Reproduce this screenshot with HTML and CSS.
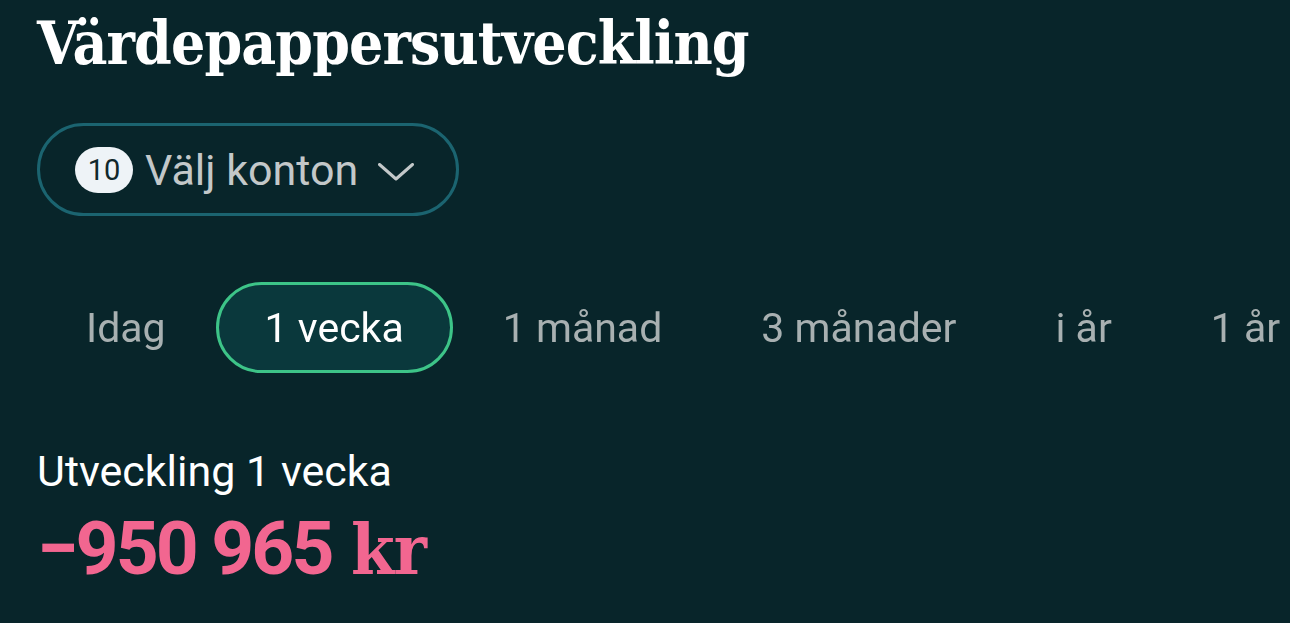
FILE: index.html
```html
<!DOCTYPE html>
<html lang="sv">
<head>
<meta charset="utf-8">
<title>Värdepappersutveckling</title>
<link rel="stylesheet" href="styles.css">
</head>
<body>
<main class="page">
  <h1 class="title">Värdepappersutveckling</h1>
  <div class="select-row">
    <button class="account-select" type="button">
      <span class="badge">10</span>
      <span class="select-label">Välj konton</span>
      <svg class="chevron" viewBox="0 0 36 18" width="36" height="18" aria-hidden="true">
        <path d="M1.5 1.5 L18 16 L34.5 1.5" fill="none" stroke="#c3c8c9" stroke-width="3" stroke-linecap="round" stroke-linejoin="round"/>
      </svg>
    </button>
  </div>
  <nav class="tabs">
    <span class="tab">Idag</span>
    <span class="tab tab-active">1 vecka</span>
    <span class="tab">1 månad</span>
    <span class="tab">3 månader</span>
    <span class="tab">i år</span>
    <span class="tab">1 år</span>
  </nav>
  <section class="summary">
    <div class="summary-label">Utveckling 1 vecka</div>
    <div class="summary-value">−950 965 <span class="unit">kr</span></div>
  </section>
</main>
</body>
</html>
```

FILE: styles.css
```css
html, body {
  margin: 0;
  padding: 0;
  background: #08252a;
  overflow: hidden;
}
.page {
  width: 1290px;
  height: 623px;
  box-sizing: border-box;
  padding: 0 0 0 37px;
  font-family: Roboto, "Noto Sans", sans-serif;
  color: #ffffff;
  overflow: hidden;
}
.title {
  margin: 0;
  padding-top: 8px;
  font-family: "DejaVu Serif", serif;
  font-stretch: condensed;
  font-weight: bold;
  font-size: 60px;
  line-height: 70px;
  color: #ffffff;
  letter-spacing: -0.9px;
}
.select-row {
  margin-top: 45px;
  display: flex;
}
.account-select {
  display: flex;
  align-items: center;
  height: 93px;
  box-sizing: border-box;
  padding: 0 42px 0 35px;
  border: 3px solid #1b6470;
  border-radius: 47px;
  background: transparent;
  font-family: Roboto, "Noto Sans", sans-serif;
  cursor: pointer;
}
.badge {
  display: flex;
  align-items: center;
  justify-content: center;
  width: 58px;
  height: 46px;
  border-radius: 23px;
  background: #eef3f7;
  color: #10282c;
  font-size: 29px;
}
.select-label {
  margin-left: 12px;
  font-size: 43px;
  color: #c3c8c9;
}
.chevron {
  margin-left: 20px;
  margin-top: 4px;
}
.tabs {
  margin-top: 66px;
  display: flex;
  gap: 1px;
  white-space: nowrap;
  -webkit-mask-image: linear-gradient(to right, #000 1235px, rgba(0,0,0,0.3) 1290px);
  mask-image: linear-gradient(to right, #000 1235px, rgba(0,0,0,0.3) 1290px);
}
.tab {
  display: flex;
  align-items: center;
  height: 91px;
  box-sizing: border-box;
  padding: 0 46px 0 46px;
  border: 3px solid transparent;
  border-radius: 46px;
  font-size: 41px;
  color: #a8b0b1;
  flex-shrink: 0;
}
.tab-active {
  background: #0a383c;
  border-color: #3dc488;
  color: #ffffff;
}
.summary {
  margin-top: 73px;
}
.summary-label {
  font-size: 43px;
  line-height: 50px;
  color: #ffffff;
}
.summary-value {
  margin-top: 10px;
  font-family: Roboto, sans-serif;
  font-weight: bold;
  font-size: 75px;
  line-height: 84px;
  letter-spacing: -3px;
  color: #f26690;
}
.unit {
  font-family: "DejaVu Serif", serif;
  font-stretch: condensed;
  font-size: 70px;
  letter-spacing: -1px;
  margin-left: 4px;
}
```
